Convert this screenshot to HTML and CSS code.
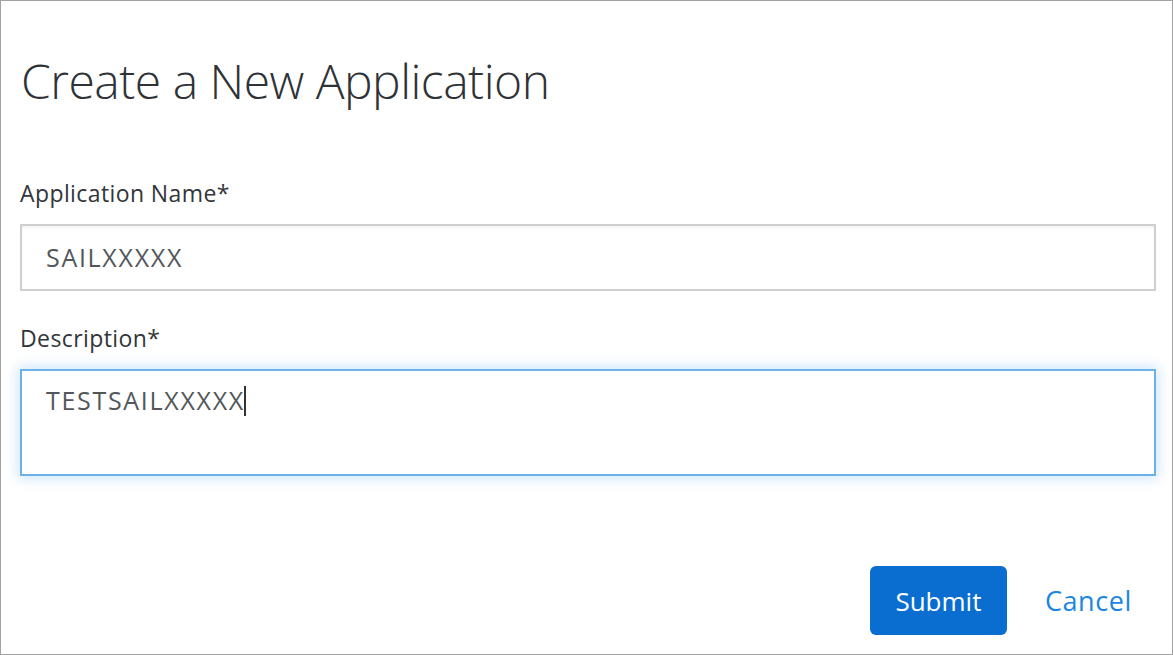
FILE: index.html
```html
<!DOCTYPE html>
<html>
<head>
<meta charset="utf-8">
<link rel="stylesheet" href="styles.css">
</head>
<body>
<div class="dialog">
  <h1 class="title">Create a New Application</h1>
  <div class="field field-first">
    <label class="label">Application Name*</label>
    <div class="input">SAILXXXXX</div>
  </div>
  <div class="field">
    <label class="label">Description*</label>
    <div class="input textarea focused">TESTSAILXXXXX<span class="caret"></span></div>
  </div>
  <div class="actions">
    <button class="btn-primary">Submit</button>
    <button class="btn-link">Cancel</button>
  </div>
</div>
</body>
</html>
```

FILE: styles.css
```css
html, body {
  margin: 0;
  padding: 0;
  background: #fff;
}
.dialog {
  box-sizing: border-box;
  width: 1173px;
  height: 655px;
  border: 1px solid #a2a2a2;
  padding: 0 16px 0 19px;
  font-family: "Open Sans", "Liberation Sans", sans-serif;
  color: #32363a;
  display: flex;
  flex-direction: column;
}
.title {
  margin: 48px 0 0 1px;
  font-size: 48px;
  font-weight: 300;
  line-height: 64px;
  color: #2f3337;
  letter-spacing: -0.5px;
}
.field {
  display: flex;
  flex-direction: column;
  margin-top: 32px;
}
.field-first {
  margin-top: 65px;
}
.label {
  font-size: 23px;
  font-weight: 400;
  line-height: 30px;
  letter-spacing: 0.4px;
  color: #32363a;
  margin-bottom: 16px;
}
.input {
  box-sizing: border-box;
  border: 2px solid #cfcfcf;
  height: 67px;
  padding: 0 24px;
  font-size: 25px;
  line-height: 63px;
  letter-spacing: 1.7px;
  color: #53575b;
  box-shadow: inset 0 2px 3px rgba(0,0,0,0.05);
}
.textarea {
  height: 107px;
  line-height: 30px;
  padding-top: 14px;
}
.focused {
  border-color: #6cb2ea;
  box-shadow: 0 0 12px 2px rgba(108,178,234,0.35);
}
.caret {
  display: inline-block;
  width: 2px;
  height: 30px;
  background: #333;
  vertical-align: -6px;
  margin-left: -1px;
}
.actions {
  margin-top: auto;
  margin-bottom: 19px;
  display: flex;
  justify-content: flex-end;
  align-items: center;
  gap: 14px;
}
.btn-primary {
  width: 137px;
  height: 69px;
  border: none;
  border-radius: 6px;
  background: #0a6ed1;
  color: #fff;
  font-family: inherit;
  font-size: 26px;
  font-weight: 400;
  cursor: pointer;
}
.btn-link {
  height: 69px;
  border: none;
  background: transparent;
  color: #1a86e2;
  font-family: inherit;
  font-size: 27px;
  letter-spacing: 0.6px;
  padding: 0 24px;
}
```
